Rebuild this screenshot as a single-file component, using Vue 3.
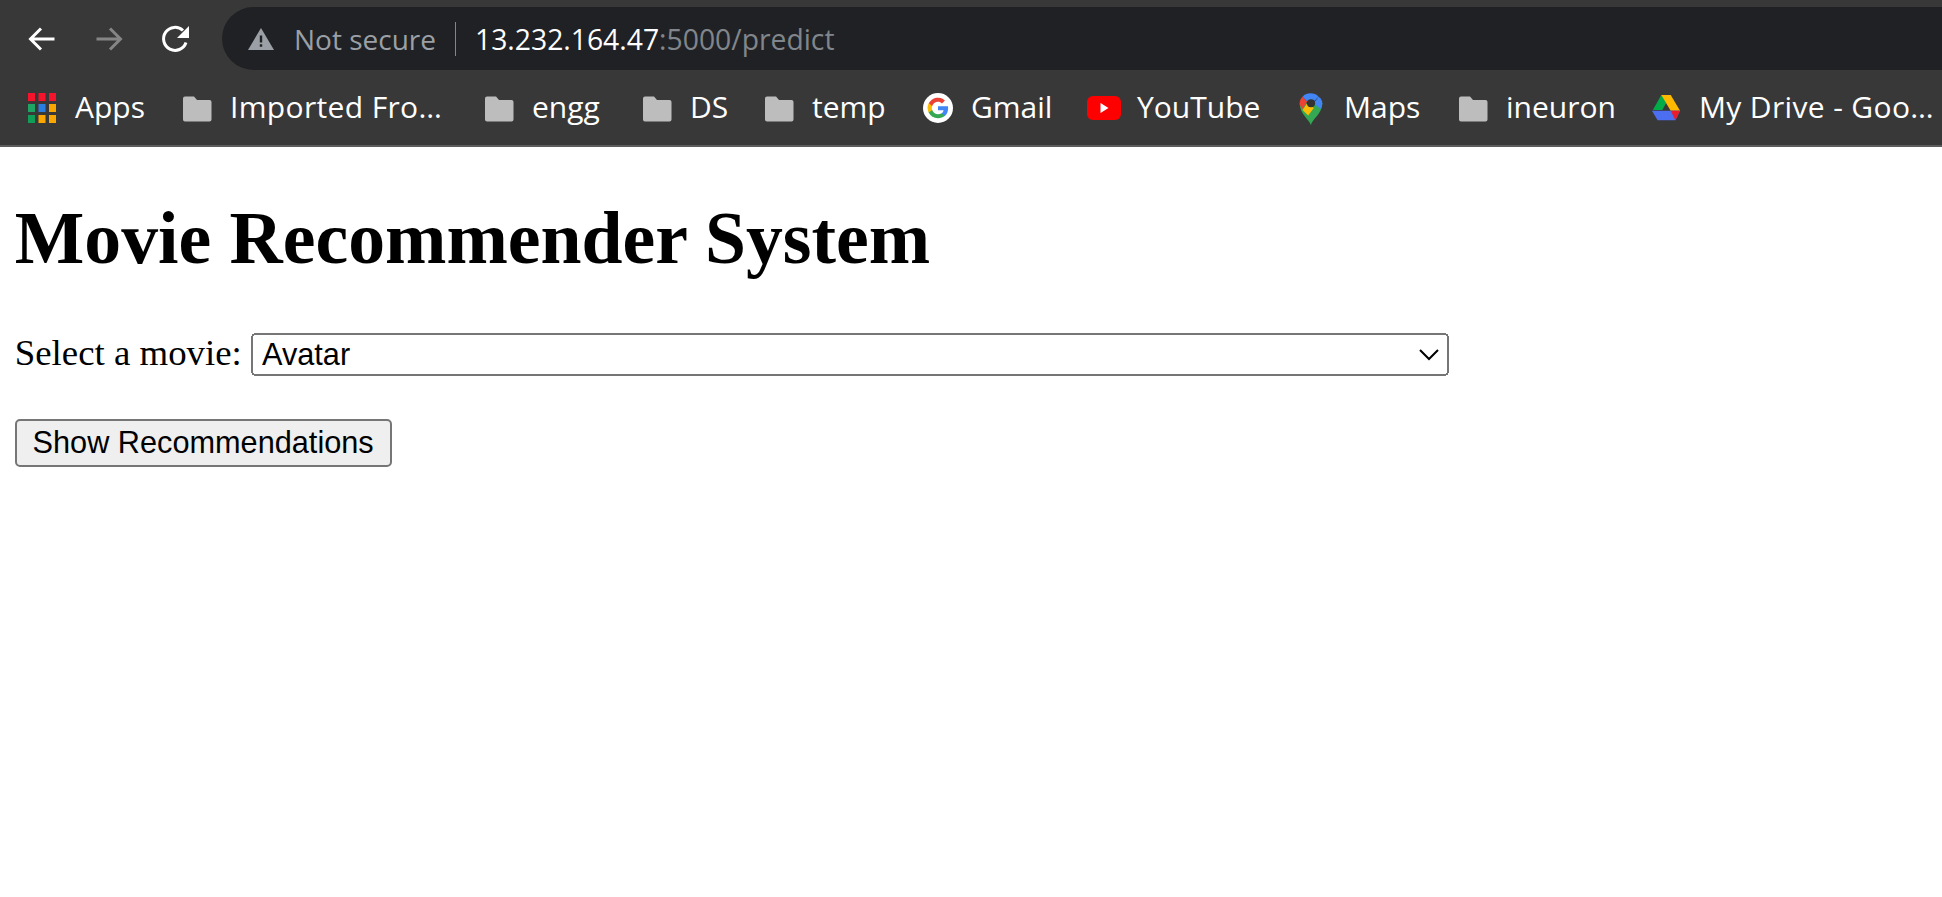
<template>
  <div class="browser">
    <div class="toolbar">
      <div class="nav">
        <svg class="nav-icon" viewBox="0 0 30 30"><path d="M27.500 15H4M14 4.500 3.500 15 14 25.500" fill="none" stroke="#fff" stroke-width="3" /></svg>
        <svg class="nav-icon" viewBox="0 0 30 30"><path d="M2.500 15h23.500M16 4.500 26.500 15 16 25.500" fill="none" stroke="#858585" stroke-width="3" /></svg>
        <svg class="nav-icon" viewBox="0 0 30 30">
          <path d="M25 18.500A11.500 11.500 0 1 1 22 6.500" fill="none" stroke="#fff" stroke-width="3" />
          <path d="M28 2v12H16z" fill="#fff" />
        </svg>
      </div>
      <div class="omnibox">
        <svg class="warn" viewBox="0 0 26 24">
          <path d="M13 1 26 23H0z" fill="#9aa0a6" />
          <path d="M11.800 8.500h2.400v7h-2.400zM11.800 17.300h2.400v2.400h-2.400z" fill="#202124" />
        </svg>
        <span class="secure">Not secure</span>
        <span class="divider"></span>
        <span class="url">13.232.164.47<span class="url-dim">:5000/predict</span></span>
      </div>
    </div>
    <div class="bookmarks">
      <div v-for="b in bookmarks" :key="b.name" class="bookmark" :style="{ width: b.width + 'px' }">
        <svg v-if="b.icon === 'apps'" class="bm-icon" viewBox="0 0 28 30">
          <g v-for="(c, i) in appColors" :key="i">
            <rect :x="(i % 3) * 10.500" :y="Math.floor(i / 3) * 11" width="7" height="8" :fill="c" />
          </g>
        </svg>
        <svg v-else-if="b.icon === 'folder'" class="bm-icon" viewBox="0 0 30 30">
          <path d="M1 5.500A2 2 0 0 1 3 3.500h9l3 3.500h12.500a2 2 0 0 1 2 2v17.500a2 2 0 0 1-2 2H3a2 2 0 0 1-2-2z" fill="#bdbdbd" />
        </svg>
        <svg v-else-if="b.icon === 'google'" class="bm-icon" viewBox="0 0 32 32">
          <circle cx="16" cy="16" r="16" fill="#fff" />
          <path d="M26.800 16.300c0-.8-.1-1.600-.2-2.300H16v4.400h6a5.200 5.200 0 0 1-2.200 3.400v2.800h3.600c2.100-2 3.400-4.900 3.400-8.300z" fill="#4285f4" />
          <path d="M16 27c3 0 5.500-1 7.400-2.700l-3.600-2.800c-1 .7-2.300 1.100-3.800 1.100-2.900 0-5.300-2-6.200-4.600H6.100v2.900A11 11 0 0 0 16 27z" fill="#34a853" />
          <path d="M9.800 18c-.2-.7-.4-1.400-.4-2.100s.1-1.400.4-2.100V11H6.100a11 11 0 0 0 0 9.900z" fill="#fbbc05" />
          <path d="M16 9.400c1.600 0 3.100.6 4.200 1.700l3.200-3.200A11 11 0 0 0 6.100 11l3.700 2.900c.9-2.600 3.300-4.500 6.200-4.500z" fill="#ea4335" />
        </svg>
        <svg v-else-if="b.icon === 'youtube'" class="bm-icon wide" viewBox="0 0 34 26">
          <rect x="0" y="1" width="34" height="24" rx="6" fill="#f00" />
          <path d="M13.500 8v10l8-5z" fill="#fff" />
        </svg>
        <svg v-else-if="b.icon === 'maps'" class="bm-icon tall" viewBox="0 0 26 36">
          <path d="M13 36C10 29 1 24 1 13h8l4 5z" fill="#34a853" />
          <path d="M13 36c1-6 12-12 12-23l-4-5-12 10z" fill="#34a853" />
          <path d="M1 13c0-3 1-5 3-7l5 5-5 8c-2-2-3-4-3-6z" fill="#ea4335" />
          <path d="M4 6a12 12 0 0 1 17 0l-5 5H9z" fill="#4285f4" />
          <path d="M21 6c3 2 4 4.500 4 7 0 2-1 4-2 6L16 13z" fill="#4285f4" />
          <path d="M4 20 9 13l7 5-6 8c-2-2-4-4-6-6z" fill="#fbbc05" />
          <circle cx="13" cy="13" r="4.300" fill="#333" />
        </svg>
        <svg v-else class="bm-icon" viewBox="0 0 32 30">
          <path d="M11 1h10L12 17H2z" fill="#00ac47" />
          <path d="M11 1h10l10 17H21z" fill="#ffba00" />
          <path d="M1 18h30l-5 10H7z" fill="#4c6ef0" />
          <path d="M21 18h10l-5 10z" fill="#ea1c2c" />
        </svg>
        <span class="bm-name" :class="{ cut: b.name.endsWith('…') }">{{ b.name }}</span>
      </div>
    </div>
  </div>
  <div class="page">
    <h1>Movie Recommender System</h1>
    <form @submit.prevent>
      <label for="movie">Select a movie:</label>{{ ' ' }}<select id="movie" v-model="movie">
        <option>Avatar</option>
        <option>Titanic</option>
        <option>Inception</option>
      </select>
      <br><br>
      <button type="submit">Show Recommendations</button>
    </form>
  </div>
</template>

<script setup>
import { ref } from 'vue'

const movie = ref('Avatar')

const appColors = [
  '#f5142b', '#f5142b', '#f5142b',
  '#1fa463', '#2a7de1', '#f9a602',
  '#0f9d58', '#f9a602', '#f9a602'
]

const bookmarks = [
  { name: 'Apps', icon: 'apps', width: 155 },
  { name: 'Imported Fro…', icon: 'folder', width: 302 },
  { name: 'engg', icon: 'folder', width: 158 },
  { name: 'DS', icon: 'folder', width: 122 },
  { name: 'temp', icon: 'folder', width: 159 },
  { name: 'Gmail', icon: 'google', width: 164 },
  { name: 'YouTube', icon: 'youtube', width: 209 },
  { name: 'Maps', icon: 'maps', width: 162 },
  { name: 'ineuron', icon: 'folder', width: 193 },
  { name: 'My Drive - Goo…', icon: 'drive', width: 290 }
]
</script>

<style>
html, body { background: #fff; overflow: hidden; }
</style>

<style scoped>
.browser {
  background: #383838;
  border-bottom: 2px solid #5c5c5c;
  font-family: "Open Sans", "Noto Sans", sans-serif;
  overflow: hidden;
}
.toolbar {
  display: flex;
  align-items: center;
  height: 63px;
  margin-top: 7px;
}
.nav {
  display: flex;
  gap: 37px;
  width: 222px;
  padding-left: 27px;
  box-sizing: border-box;
}
.nav-icon { width: 30px; height: 30px; flex: none; }
.omnibox {
  flex: 1;
  height: 63px;
  display: flex;
  align-items: center;
  background: #202124;
  border-radius: 32px 0 0 32px;
  padding-left: 26px;
  font-size: 28px;
}
.warn { width: 26px; height: 24px; flex: none; margin-right: 20px; }
.secure { color: #9aa0a6; }
.divider { width: 1px; height: 34px; background: #80868b; margin: 0 19px; }
.url { color: #fff; font-size: 28.3px; }
.url-dim { color: #80868b; }
.bookmarks {
  display: flex;
  align-items: center;
  height: 75px;
  padding-left: 27px;
}
.bookmark {
  display: flex;
  align-items: center;
  gap: 18px;
  flex: none;
  color: #fff;
  font-size: 30px;
  white-space: nowrap;
}
.bm-name { padding-bottom: 2px; }
.bm-name.cut { letter-spacing: 0.35px; }
.bm-icon { width: 30px; height: 30px; flex: none; }
.bm-icon.wide { width: 34px; margin-right: -2px; }
.bm-icon.tall { height: 34px; }
.page {
  zoom: 2.303;
  padding: 0 6.4px;
  font-family: "Liberation Serif", serif;
  color: #000;
}
h1 { margin: 21.44px 0; font-size: 32px; font-family: "Liberation Serif", serif; }
select { width: 520.2px; height: 18.7px; font-family: "Liberation Sans", sans-serif; }
button { font-family: "Liberation Sans", sans-serif; }
</style>
